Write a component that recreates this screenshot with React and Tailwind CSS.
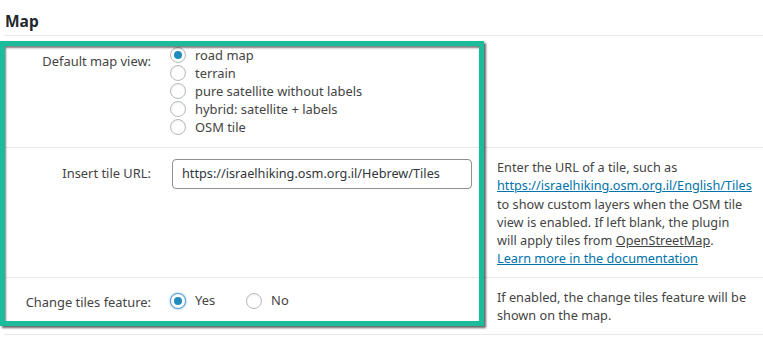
import React from 'react';

const font = { fontFamily: '"Noto Sans", "Open Sans", Arial, sans-serif' };

const Radio = ({ checked, focus }) => (
  <span
    className={
      'relative inline-block w-4 h-4 shrink-0 rounded-full bg-white border ' +
      (focus ? 'border-[#5b9dd9] shadow-[0_0_2px_rgba(30,140,190,0.8)]' : 'border-[#b4b9be] shadow-[inset_0_1px_2px_rgba(0,0,0,0.07)]')
    }
  >
    {checked && (
      <span className="absolute left-[3px] top-[3px] w-2 h-2 rounded-full bg-[#1e8cbe]" />
    )}
  </span>
);

const views = ['road map', 'terrain', 'pure satellite without labels', 'hybrid: satellite + labels', 'OSM tile'];

export default function App() {
  return (
    <div className="relative w-[763px] h-[340px] bg-white text-[#444] overflow-hidden" style={font}>
      {/* heading */}
      <div className="pl-[5px] pt-[11px] h-[35px]">
        <h2 className="text-[15.5px] font-bold text-[#23282d] leading-[20px]">Map</h2>
      </div>

      <div className="ml-[4px] border-t border-[#e9e9e9] text-[12.9px]">
        {/* default map view */}
        <div className="flex border-b border-[#e9e9e9] h-[112px]">
          <div className="w-[147px] text-right leading-[18px] pt-[16px]">Default map view:</div>
          <div className="ml-[19px] w-[302px] pt-[10px] flex flex-col">
            {views.map((v, i) => (
              <label key={i} className="flex items-center h-[18px]">
                <Radio checked={i === 0} />
                <span className="ml-[9px] mt-[1px]">{v}</span>
              </label>
            ))}
          </div>
        </div>

        {/* tile url */}
        <div className="flex border-b border-[#e9e9e9] h-[130px]">
          <div className="w-[147px] text-right leading-[18px] pt-[16px]">Insert tile URL:</div>
          <div className="ml-[19px] w-[302px] pt-[11px] pl-[2px]">
            <div className="w-[300px] h-[30px] border border-[#8c8f94] rounded-[4px] flex items-center pl-[9px] text-[12.7px] text-[#32373c]">
              https://israelhiking.osm.org.il/Hebrew/Tiles
            </div>
          </div>
          <div className="ml-[25px] pt-[10px] text-[12.7px] leading-[18.3px] whitespace-nowrap">
            Enter the URL of a tile, such as<br />
            <a className="text-[#0073aa] underline">https://israelhiking.osm.org.il/English/Tiles</a><br />
            to show custom layers when the OSM tile<br />
            view is enabled. If left blank, the plugin<br />
            will apply tiles from <a className="underline">OpenStreetMap</a>.<br />
            <a className="text-[#0073aa] underline">Learn more in the documentation</a>
          </div>
        </div>

        {/* change tiles */}
        <div className="flex border-b border-[#e9e9e9] h-[57px]">
          <div className="w-[147px] text-right leading-[18px] pt-[15px]">Change tiles feature:</div>
          <div className="ml-[19px] w-[302px] pt-[14px] flex items-start">
            <label className="flex items-center h-[18px]">
              <Radio checked focus />
              <span className="ml-[9px] -mt-[1px]">Yes</span>
            </label>
            <label className="flex items-center h-[18px] ml-[31px]">
              <Radio />
              <span className="ml-[9px] -mt-[1px]">No</span>
            </label>
          </div>
          <div className="ml-[25px] pt-[10px] text-[12.7px] leading-[18.3px] whitespace-nowrap">
            If enabled, the change tiles feature will be<br />
            shown on the map.
          </div>
        </div>
      </div>

      {/* highlight annotation */}
      <div className="absolute left-0 top-[41px] w-[484px] h-[285px] border-[5px] border-[#1abc9c] pointer-events-none shadow-[2px_2px_2px_rgba(0,0,0,0.6),inset_1px_2px_2px_rgba(0,0,0,0.5)]" />
    </div>
  );
}
